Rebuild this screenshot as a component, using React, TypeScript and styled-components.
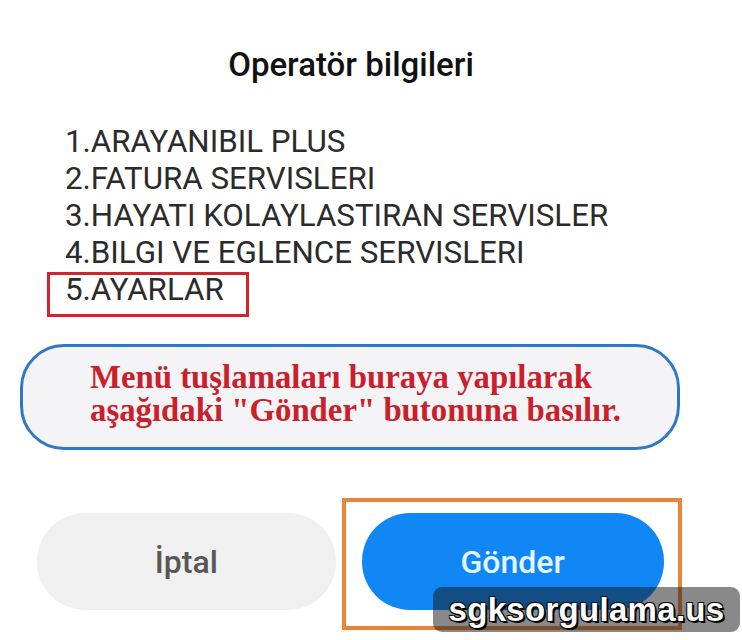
import React from "react";
import styled, { createGlobalStyle } from "styled-components";

const GlobalStyle = createGlobalStyle`
  html, body {
    margin: 0;
    padding: 0;
    background: #ffffff;
  }
  body {
    font-family: Roboto, "Noto Sans", sans-serif;
    overflow: hidden;
  }
`;

const Screen = styled.div`
  position: relative;
  width: 742px;
  height: 640px;
  overflow: hidden;
  background: #ffffff;
`;

const Dialog = styled.div`
  width: 662px;
  margin-left: 20px;
  padding-top: 46px;
  display: flex;
  flex-direction: column;
`;

const Title = styled.h1`
  margin: 0;
  font-family: Roboto, sans-serif;
  font-weight: 500;
  font-size: 33px;
  line-height: 37px;
  color: #111111;
  text-align: center;
`;

const MenuList = styled.ul`
  list-style: none;
  margin: 40px 0 0;
  padding: 0 0 0 45px;
`;

const MenuItem = styled.li<{ $marked?: boolean }>`
  position: relative;
  font-family: Roboto, sans-serif;
  font-weight: 400;
  font-size: 31.3px;
  line-height: 37px;
  color: #2b2b2b;
  white-space: nowrap;

  &::after {
    content: "";
    display: ${(p) => (p.$marked ? "block" : "none")};
    position: absolute;
    left: -18px;
    top: 1px;
    width: 196px;
    height: 39px;
    border: 3px solid #d2232e;
  }
`;

const Callout = styled.div`
  margin-top: 36px;
  width: 660px;
  box-sizing: border-box;
  border: 3.5px solid #2f79c2;
  border-radius: 44px;
  background: #f4f4f6;
  padding: 14px 0 20px 67px;
`;

const CalloutText = styled.p`
  margin: 0;
  font-family: "Liberation Serif", "Times New Roman", serif;
  font-weight: 700;
  font-size: 32.8px;
  line-height: 33px;
  color: #c9202b;
  white-space: nowrap;
`;

const ButtonRow = styled.div`
  margin-top: 48px;
  display: flex;
  align-items: flex-start;
  gap: 6px;
`;

const PillButton = styled.button<{ $primary?: boolean }>`
  width: ${(p) => (p.$primary ? "302px" : "300px")};
  height: 97px;
  border: none;
  border-radius: 48px;
  font-family: Roboto, sans-serif;
  font-weight: 500;
  font-size: 32px;
  background: ${(p) => (p.$primary ? "#1187f5" : "#f0f0f0")};
  color: ${(p) => (p.$primary ? "#e4f9ff" : "#575757")};
  margin: ${(p) => (p.$primary ? "0" : "15px 0 0 17px")};
  cursor: pointer;
`;

const FocusFrame = styled.div`
  width: 342px;
  height: 132px;
  box-sizing: border-box;
  border: 4px solid #e8843a;
  padding: 11px 0 0 16px;
`;

const Watermark = styled.div`
  position: absolute;
  left: 433px;
  top: 587px;
  width: 307px;
  height: 45px;
  border-radius: 9px;
  background: rgba(20, 20, 20, 0.5);
  display: flex;
  align-items: center;
  justify-content: center;
  font-family: "Liberation Sans", Arial, sans-serif;
  font-weight: 700;
  font-size: 33px;
  color: #ffffff;
  text-shadow: 2px 2px 0 #000, -1px -1px 0 #111, 1px -1px 0 #111, -1px 1px 0 #111;
  letter-spacing: 0.3px;
`;

const menu = [
  "1.ARAYANIBIL PLUS",
  "2.FATURA SERVISLERI",
  "3.HAYATI KOLAYLASTIRAN SERVISLER",
  "4.BILGI VE EGLENCE SERVISLERI",
  "5.AYARLAR",
];

const App = () => {
  return (
    <>
      <GlobalStyle />
      <Screen>
        <Dialog>
          <Title>Operatör bilgileri</Title>
          <MenuList>
            {menu.map((item, i) => (
              <MenuItem key={item} $marked={i === menu.length - 1}>
                {item}
              </MenuItem>
            ))}
          </MenuList>
          <Callout>
            <CalloutText>Menü tuşlamaları buraya yapılarak</CalloutText>
            <CalloutText>aşağıdaki "Gönder" butonuna basılır.</CalloutText>
          </Callout>
          <ButtonRow>
            <PillButton>İptal</PillButton>
            <FocusFrame>
              <PillButton $primary>Gönder</PillButton>
            </FocusFrame>
          </ButtonRow>
        </Dialog>
        <Watermark>sgksorgulama.us</Watermark>
      </Screen>
    </>
  );
};

export default App;
